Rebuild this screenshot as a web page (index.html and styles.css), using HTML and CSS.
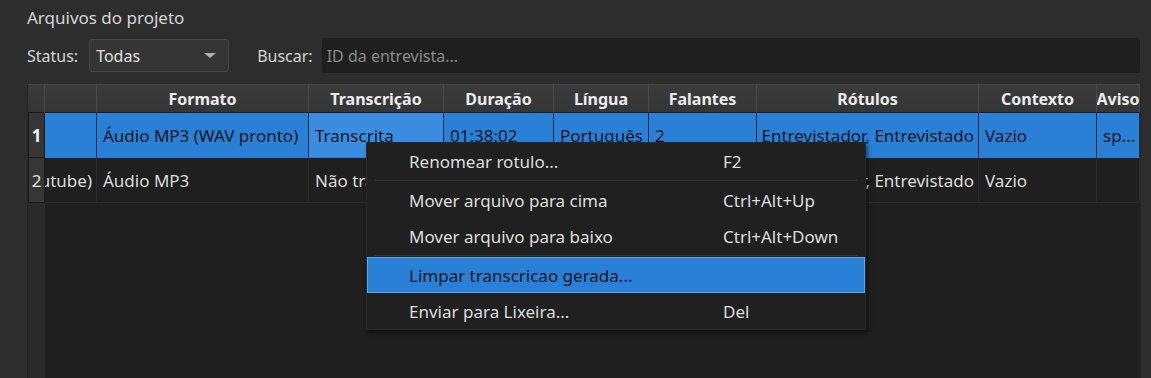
FILE: index.html
```html
<!DOCTYPE html>
<html lang="pt">
<head>
    <meta charset="UTF-8">
    <title>Arquivos do projeto</title>
    <link rel="stylesheet" href="styles.css">
</head>
<body>
    <div id="painel">
        <div class="titulo">Arquivos do projeto</div>

        <div class="filtros">
            <span class="rotulo">Status:</span>
            <div class="combo">
                <span>Todas</span>
                <span class="seta"></span>
            </div>
            <span class="rotulo buscar">Buscar:</span>
            <div class="busca">ID da entrevista...</div>
        </div>

        <div class="tabela">
            <div class="canto"></div>
            <div class="cab"></div>
            <div class="cab">Formato</div>
            <div class="cab">Transcrição</div>
            <div class="cab">Duração</div>
            <div class="cab">Língua</div>
            <div class="cab">Falantes</div>
            <div class="cab">Rótulos</div>
            <div class="cab">Contexto</div>
            <div class="cab">Aviso</div>

            <div class="num sel">1</div>
            <div class="cel marcada"></div>
            <div class="cel marcada">Áudio MP3 (WAV pronto)</div>
            <div class="cel marcada atual">Transcrita</div>
            <div class="cel marcada">01:38:02</div>
            <div class="cel marcada">Português</div>
            <div class="cel marcada">2</div>
            <div class="cel marcada fim"><span>Entrevistador, Entrevistado</span></div>
            <div class="cel marcada">Vazio</div>
            <div class="cel marcada">sp...</div>

            <div class="num">2</div>
            <div class="cel fim"><span>Entrevista (Youtube)</span></div>
            <div class="cel">Áudio MP3</div>
            <div class="cel">Não transcrita</div>
            <div class="cel">00:52:14</div>
            <div class="cel">Português</div>
            <div class="cel">2</div>
            <div class="cel fim"><span>Entrevistador, Entrevistado</span></div>
            <div class="cel">Vazio</div>
            <div class="cel"></div>

            <div class="num vazio"></div>
            <div class="resto"></div>
        </div>
    </div>

    <div class="menu">
        <div class="item"><span>Renomear rotulo...</span><span class="atalho">F2</span></div>
        <div class="sep"></div>
        <div class="item"><span>Mover arquivo para cima</span><span class="atalho">Ctrl+Alt+Up</span></div>
        <div class="item"><span>Mover arquivo para baixo</span><span class="atalho">Ctrl+Alt+Down</span></div>
        <div class="sep"></div>
        <div class="item ativo"><span>Limpar transcricao gerada...</span><span class="atalho"></span></div>
        <div class="item"><span>Enviar para Lixeira...</span><span class="atalho">Del</span></div>
    </div>
</body>
</html>
```

FILE: styles.css
```css
body {
    margin: 0;
    background-color: #2d2d2d;
    color: #d6d6d6;
    font-family: "Noto Sans", "Open Sans", sans-serif;
    font-size: 16px;
    height: 378px;
    overflow: hidden;
}
#painel {
    padding: 6px 11px 0 27px;
}
.titulo {
    font-size: 17px;
    line-height: 23px;
    height: 23px;
}
.filtros {
    display: flex;
    align-items: center;
    margin-top: 9px;
    height: 35px;
}
.rotulo {
    margin-right: 11px;
}
.rotulo.buscar {
    margin-left: 28px;
    margin-right: 9px;
}
.combo {
    width: 140px;
    height: 33px;
    box-sizing: border-box;
    border: 1px solid #474747;
    border-radius: 3px;
    background-color: #353535;
    display: flex;
    align-items: center;
    justify-content: space-between;
    padding: 0 12px 0 6px;
    color: #e0e0e0;
}
.seta {
    width: 0;
    height: 0;
    border-left: 6px solid transparent;
    border-right: 6px solid transparent;
    border-top: 5px solid #b0b0b0;
}
.busca {
    flex: 1;
    height: 35px;
    background-color: #1f1f1f;
    border-radius: 3px;
    display: flex;
    align-items: center;
    padding-left: 5px;
    color: #8a8a8a;
}
.tabela {
    margin-top: 11px;
    margin-left: 1px;
    width: 1112px;
    height: 300px;
    background-color: #1f1f1f;
    box-shadow: -1px 0 0 #232323, 1px 0 0 #262626;
    display: grid;
    grid-template-columns: 17px 52px 212px 135px 110px 95px 108px 222px 118px 43px;
    grid-template-rows: 29px 45px 45px 1fr;
}
.canto, .cab {
    background: linear-gradient(#3b3b3b, #353535);
    border-top: 1px solid #454545;
    border-bottom: 1px solid #1b1b1b;
    border-right: 1px solid #4a4a4a;
    box-sizing: border-box;
}
.cab {
    display: flex;
    align-items: center;
    justify-content: center;
    font-weight: bold;
    color: #ececec;
    overflow: hidden;
    white-space: nowrap;
}
.num {
    background-color: #363636;
    border: 1px solid #1c1c1c;
    border-top: none;
    box-sizing: border-box;
    display: flex;
    align-items: center;
    justify-content: center;
    color: #e0e0e0;
    font-size: 17px;
}
.num.sel {
    font-weight: bold;
    color: #f2f2f2;
}
.num.vazio {
    background-color: #2a2a2a;
    border: none;
}
.cel {
    display: flex;
    align-items: center;
    padding-left: 6px;
    box-sizing: border-box;
    border-right: 1px solid #2a2a2a;
    border-bottom: 1px solid #2a2a2a;
    white-space: nowrap;
    overflow: hidden;
    font-size: 17px;
    color: #dcdcdc;
}
.cel.fim {
    justify-content: flex-end;
    padding-left: 0;
    padding-right: 4px;
}
.cel.marcada {
    background-color: #2a7fd7;
    color: #101820;
    border-right-color: #1d2b3a;
    border-bottom-color: #2a7fd7;
}
.cel.atual {
    background-color: #3a8ce0;
}
.resto {
    grid-column: 2 / 11;
}
.menu {
    position: absolute;
    left: 366px;
    top: 142px;
    width: 500px;
    box-sizing: border-box;
    background-color: #202020;
    border: 1px solid #282828;
    box-shadow: 2px 3px 4px rgba(0, 0, 0, 0.45);
    font-size: 17px;
    color: #dedede;
}
.item {
    display: flex;
    align-items: center;
    height: 36px;
    padding-left: 42px;
    box-sizing: border-box;
}
.item span:first-child {
    width: 314px;
}
.item.ativo {
    background-color: #2a7fd7;
    border: 1px solid #5da3ea;
    padding-left: 41px;
    color: #0f1722;
}
.sep {
    height: 1px;
    background-color: #353535;
    margin: 1px 8px;
}
```
